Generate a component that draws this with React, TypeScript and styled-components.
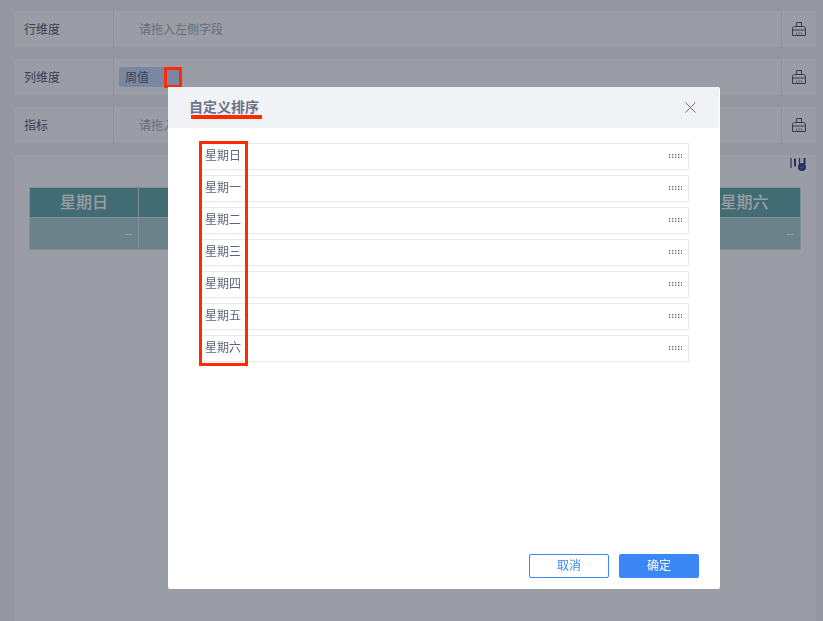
import styled, { createGlobalStyle } from 'styled-components';

const GlobalStyle = createGlobalStyle`
  html, body { margin: 0; padding: 0; height: 100%; overflow: hidden; }
  body {
    background: #f3f3f5;
    font-family: "Noto Sans CJK SC", "Noto Sans", sans-serif;
  }
`;

const Page = styled.div`
  width: 823px;
  height: 621px;
  box-sizing: border-box;
  padding: 11px 7px 0 14px;
  display: flex;
  flex-direction: column;
  gap: 12px;
  overflow: hidden;
`;
const DimRow = styled.div`
  display: flex;
  height: 36px;
  background: #ffffff;
  flex-shrink: 0;
`;
const DimLabel = styled.div`
  width: 100px;
  box-sizing: border-box;
  padding: 0 0 2px 10px;
  display: flex;
  align-items: center;
  font-size: 12px;
  color: #3c4456;
  border-right: 1px solid #e6e7ea;
`;
const DimBody = styled.div`
  flex: 1;
  display: flex;
  align-items: center;
  padding-left: 5px;
  font-size: 12px;
  color: #9aa0ab;
`;
const Placeholder = styled.span`
  padding: 0 0 2px 20px;
`;
const Chip = styled.span`
  width: 62px;
  height: 20px;
  box-sizing: border-box;
  padding: 0 0 2px 6px;
  display: flex;
  align-items: center;
  border-radius: 3px;
  background: #bfd3fb;
  color: #3c4456;
  font-size: 12px;
`;
const DimAction = styled.div`
  width: 34px;
  display: flex;
  align-items: center;
  justify-content: center;
  border-left: 1px solid #e6e7ea;
  color: #313c5c;
`;
const ChartPanel = styled.div`
  flex: 1;
  background: #ffffff;
  padding: 2px 15px 0;
`;
const ChartToolbar = styled.div`
  height: 30px;
  display: flex;
  justify-content: flex-end;
  margin-right: -5px;
  color: #0f2573;
`;
const DataTable = styled.div`
  display: grid;
  grid-template-columns: 109px repeat(5, 110px) 111px;
  width: 772px;
  border: 1px solid #cfe3de;
  box-sizing: border-box;
`;
const HeadCell = styled.div`
  height: 30px;
  box-sizing: border-box;
  padding-bottom: 3px;
  display: flex;
  align-items: center;
  justify-content: center;
  background: #4d9c9a;
  border-right: 1px solid #cfe3de;
  border-bottom: 1px solid #cfe3de;
  color: #ffffff;
  font-size: 16px;
  font-weight: 500;
  &:nth-child(7) { border-right: 0; }
`;
const ValueCell = styled.div`
  height: 31px;
  box-sizing: border-box;
  padding: 0 6px 2px 0;
  display: flex;
  align-items: center;
  justify-content: flex-end;
  background: #a3c8cb;
  border-right: 1px solid #cfe3de;
  color: #ffffff;
  font-size: 10px;
  font-weight: 700;
  &:last-child { border-right: 0; }
`;

const Mask = styled.div`
  position: fixed;
  inset: 0;
  background: rgba(53, 59, 75, 0.5);
`;
const Dialog = styled.div`
  position: absolute;
  left: 168px;
  top: 87px;
  width: 552px;
  height: 502px;
  display: flex;
  flex-direction: column;
  background: #ffffff;
  border-radius: 2px;
`;
const DialogHeader = styled.div`
  height: 41px;
  flex-shrink: 0;
  margin-right: 1px;
  box-sizing: border-box;
  padding: 0 23px 0 21px;
  display: flex;
  align-items: center;
  justify-content: space-between;
  background: #f1f2f6;
`;
const DialogTitle = styled.div`
  padding-bottom: 3px;
  font-size: 14px;
  font-weight: 700;
  color: #6b7385;
`;
const CloseButton = styled.button`
  padding: 0;
  border: 0;
  background: none;
  display: flex;
  color: #6b7385;
`;
const SortList = styled.div`
  flex: 1;
  padding: 15px 31px 0 31px;
  display: flex;
  flex-direction: column;
  gap: 5px;
`;
const SortItem = styled.div`
  height: 27px;
  box-sizing: border-box;
  padding: 0 6px 0 5px;
  display: flex;
  align-items: center;
  justify-content: space-between;
  border: 1px solid #e8e9ec;
  font-size: 12px;
  color: #5d6679;
  svg { margin-bottom: 2px; }
`;
const SortLabel = styled.span`
  padding-bottom: 4px;
`;
const DialogFooter = styled.div`
  height: 35px;
  flex-shrink: 0;
  padding-right: 21px;
  display: flex;
  justify-content: flex-end;
  gap: 10px;
`;
const FooterButton = styled.button<{ $primary?: boolean }>`
  width: 80px;
  height: 24px;
  padding: 0 0 3px;
  border: 1px solid #3a87f5;
  border-radius: 2px;
  font-family: inherit;
  font-size: 12px;
  background: ${({ $primary }) => ($primary ? '#3a87f5' : '#ffffff')};
  color: ${({ $primary }) => ($primary ? '#ffffff' : '#3a87f5')};
`;

const Mark = styled.div<{ $x: number; $y: number; $w: number; $h: number }>`
  position: absolute;
  left: ${({ $x }) => $x}px;
  top: ${({ $y }) => $y}px;
  width: ${({ $w }) => $w}px;
  height: ${({ $h }) => $h}px;
  box-sizing: border-box;
  border: 3px solid #ff2a00;
`;
const Underline = styled.div`
  position: absolute;
  left: 191px;
  top: 115px;
  width: 71px;
  height: 4px;
  background: #ff2a00;
`;

const days = ['星期日', '星期一', '星期二', '星期三', '星期四', '星期五', '星期六'];
// the dialog covers the middle columns of the table
const isCovered = (i: number) => i > 0 && i < days.length - 1;

function BrushIcon() {
  return (
    <svg width="14" height="14" viewBox="0 0 14 14" fill="none" stroke="currentColor" strokeWidth="1">
      <path d="M4.5 4.5V.5h5v4" />
      <path d="M.5 13.5V6.5c0-1.2.8-2 2-2h9c1.2 0 2 .8 2 2v7z" />
      <path d="M.5 8h13" />
      <path d="M4.5 10.5v3M7 10v3.5M9.5 10.5v3" strokeOpacity="0.6" />
    </svg>
  );
}

function ChartCheckIcon() {
  return (
    <svg width="16" height="14" viewBox="0 0 16 14" fill="none">
      <path d="M1 1v10" stroke="currentColor" strokeWidth="1.2" />
      <path d="M5 1.5v8" stroke="currentColor" strokeWidth="2" />
      <path d="M9.5 1v6" stroke="currentColor" strokeWidth="1.2" />
      <path d="M14.5 1v6" stroke="currentColor" strokeWidth="2" />
      <circle cx="12" cy="10" r="4" fill="currentColor" />
      <path d="M10.2 10l1.3 1.4 2.2-2.5" stroke="#8c96b8" strokeWidth="0.8" />
    </svg>
  );
}

function DragDots() {
  const cols = [0, 3, 6, 9, 12];
  return (
    <svg width="13.4" height="4" viewBox="0 0 13.4 4" fill="#6a7488">
      {cols.map((x) => (
        <g key={x}>
          <rect x={x} y="0" width="1.4" height="1.4" />
          <rect x={x} y="2.6" width="1.4" height="1.4" />
        </g>
      ))}
    </svg>
  );
}

export default function App() {
  return (
    <>
      <GlobalStyle />
      <Page>
        <DimRow>
          <DimLabel>行维度</DimLabel>
          <DimBody>
            <Placeholder>请拖入左侧字段</Placeholder>
          </DimBody>
          <DimAction>
            <BrushIcon />
          </DimAction>
        </DimRow>
        <DimRow>
          <DimLabel>列维度</DimLabel>
          <DimBody>
            <Chip>周值</Chip>
          </DimBody>
          <DimAction>
            <BrushIcon />
          </DimAction>
        </DimRow>
        <DimRow>
          <DimLabel>指标</DimLabel>
          <DimBody>
            <Placeholder>请拖入左侧字段</Placeholder>
          </DimBody>
          <DimAction>
            <BrushIcon />
          </DimAction>
        </DimRow>
        <ChartPanel>
          <ChartToolbar>
            <ChartCheckIcon />
          </ChartToolbar>
          <DataTable>
            {days.map((d, i) => (
              <HeadCell key={d}>{isCovered(i) ? '' : d}</HeadCell>
            ))}
            {days.map((d, i) => (
              <ValueCell key={d}>{isCovered(i) ? '' : '--'}</ValueCell>
            ))}
          </DataTable>
        </ChartPanel>
      </Page>
      <Mask>
        <Mark $x={164} $y={67} $w={18} $h={21} />
        <Dialog>
          <DialogHeader>
            <DialogTitle>自定义排序</DialogTitle>
            <CloseButton type="button">
              <svg width="11" height="11" viewBox="0 0 11 11" stroke="currentColor" strokeWidth="1">
                <path d="M.5.5l10 10M10.5.5l-10 10" />
              </svg>
            </CloseButton>
          </DialogHeader>
          <SortList>
            {days.map((d) => (
              <SortItem key={d}>
                <SortLabel>{d}</SortLabel>
                <DragDots />
              </SortItem>
            ))}
          </SortList>
          <DialogFooter>
            <FooterButton type="button">取消</FooterButton>
            <FooterButton type="button" $primary>
              确定
            </FooterButton>
          </DialogFooter>
        </Dialog>
        <Underline />
        <Mark $x={199} $y={141} $w={49} $h={225} />
      </Mask>
    </>
  );
}
